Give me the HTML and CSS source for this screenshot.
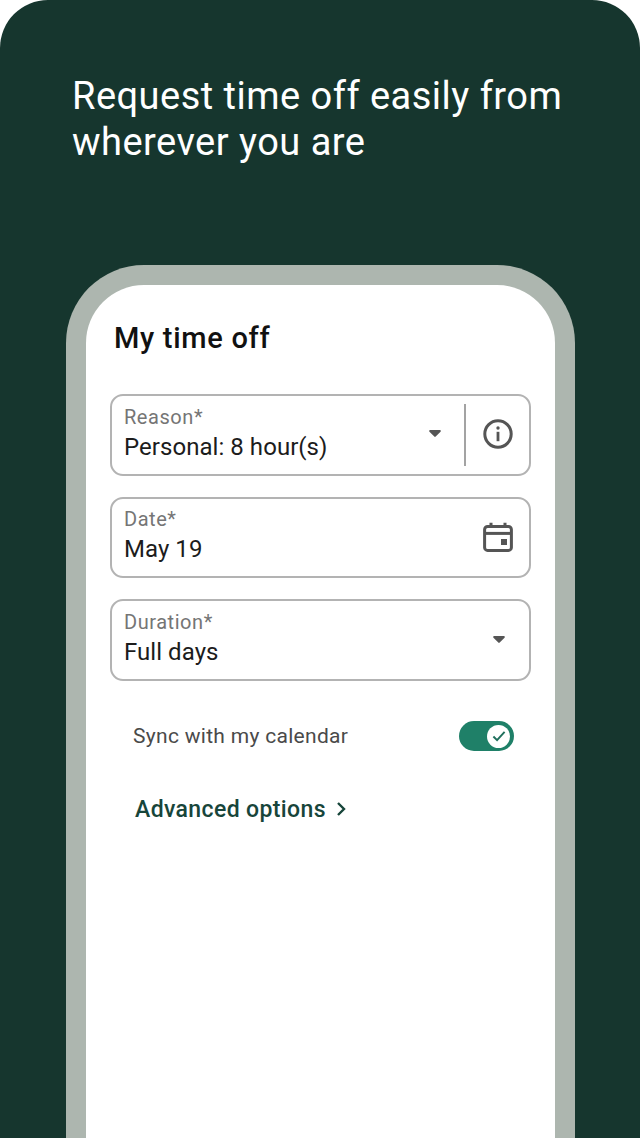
FILE: index.html
```html
<!DOCTYPE html>
<html lang="en">
<head>
<meta charset="utf-8">
<title>Request time off</title>
<link rel="stylesheet" href="styles.css">
</head>
<body>
<main class="screen">
  <h1 class="headline">Request time off easily from wherever you are</h1>
  <section class="phone">
    <div class="display">
      <h2 class="title">My time off</h2>
      <div class="field">
        <div class="field-text">
          <span class="label">Reason*</span>
          <span class="value">Personal: 8 hour(s)</span>
        </div>
        <svg class="caret" viewBox="0 0 12 7"><path d="M1.2 0h9.6a1 1 0 0 1 .75 1.7L6.7 6.6a1 1 0 0 1-1.4 0L.45 1.7A1 1 0 0 1 1.2 0z"/></svg>
        <span class="divider"></span>
        <svg class="icon" viewBox="0 0 30 30"><circle cx="15" cy="15" r="13.2" class="line"/><circle cx="15" cy="9" r="1.7" class="solid"/><rect x="13.6" y="12.8" width="2.8" height="9.4" class="solid"/></svg>
      </div>
      <div class="field">
        <div class="field-text">
          <span class="label">Date*</span>
          <span class="value">May 19</span>
        </div>
        <svg class="icon" viewBox="0 0 30 30"><rect x="1.6" y="4.4" width="26.8" height="24" rx="3" class="line"/><path d="M1.6 11.4h26.8" class="line"/><path d="M8 .8v4M22 .8v4" class="line"/><rect x="18" y="17" width="6" height="6" class="solid"/></svg>
      </div>
      <div class="field">
        <div class="field-text">
          <span class="label">Duration*</span>
          <span class="value">Full days</span>
        </div>
        <svg class="caret caret-end" viewBox="0 0 12 7"><path d="M1.2 0h9.6a1 1 0 0 1 .75 1.7L6.7 6.6a1 1 0 0 1-1.4 0L.45 1.7A1 1 0 0 1 1.2 0z"/></svg>
      </div>
      <div class="sync">
        <span class="sync-label">Sync with my calendar</span>
        <span class="toggle">
          <span class="knob">
            <svg viewBox="0 0 16 16"><path d="M1.6 8.6l4.2 4.2 8.6-9.4"/></svg>
          </span>
        </span>
      </div>
      <div class="advanced">
        <span>Advanced options</span>
        <svg viewBox="0 0 10 16"><path d="M2 2l6 6-6 6"/></svg>
      </div>
    </div>
  </section>
</main>
</body>
</html>
```

FILE: styles.css
```css
* { box-sizing: border-box; }
html, body { margin: 0; background: #fff; }
body { width: 640px; height: 1138px; overflow: hidden; font-family: "Roboto", "Liberation Sans", sans-serif; }
.screen {
  height: 1138px;
  background: #16362e;
  border-radius: 48px 48px 0 0;
  padding: 73px 66px 0 72px;
  overflow: hidden;
}
.headline {
  margin: 0;
  width: 520px;
  color: #fff;
  font-size: 38px;
  line-height: 46px;
  font-weight: 400;
  letter-spacing: 0.48px;
  height: 192px;
}
.phone {
  margin-left: -6px;
  width: 509px;
  height: 900px;
  padding: 20px 20px 0;
  background: #adb6af;
  border-radius: 78px 78px 0 0;
}
.display {
  height: 860px;
  background: #fff;
  border-radius: 58px 58px 0 0;
  padding: 35px 24px 0;
}
.title {
  margin: 0 0 38px 4px;
  font-size: 29px;
  line-height: 36px;
  font-weight: 500;
  letter-spacing: 0.7px;
  color: #111;
}
.field {
  display: flex;
  align-items: center;
  height: 81.5px;
  margin-bottom: 21px;
  padding: 0 16px 0 12px;
  border: 2px solid #b3b3b3;
  border-radius: 13px;
}
.field-text { flex: 1; display: flex; flex-direction: column; gap: 1px; padding-bottom: 4px; }
.label { font-size: 20px; line-height: 28px; letter-spacing: 0.55px; color: #757575; }
.value { font-size: 24px; line-height: 31px; letter-spacing: 0.05px; color: #1c1c1c; }
.caret { width: 12px; height: 7px; fill: #555; margin: -2px 23px 0 0; }
.caret-end { margin: -1px 8px 0 0; }
.divider { width: 1.5px; height: 62px; background: #a3a3a3; margin-right: 17.5px; }
.icon { width: 30px; height: 30px; flex: none; margin-top: -1px; }
.line { fill: none; stroke: #555; stroke-width: 3; }
.solid { fill: #555; }
.sync {
  display: flex;
  align-items: center;
  justify-content: space-between;
  height: 30px;
  margin: 40.5px 17px 0 23px;
}
.sync-label { font-size: 21px; letter-spacing: 0.3px; color: #4a4a4a; }
.toggle {
  display: flex;
  justify-content: flex-end;
  align-items: center;
  width: 55px;
  height: 30px;
  padding-right: 4px;
  background: #1f8068;
  border-radius: 15px;
}
.knob {
  display: flex;
  align-items: center;
  justify-content: center;
  width: 23px;
  height: 23px;
  background: #fff;
  border-radius: 50%;
}
.knob svg { width: 14px; height: 14px; fill: none; stroke: #1f6f5c; stroke-width: 2.2; }
.advanced {
  display: flex;
  align-items: center;
  gap: 10px;
  margin: 42px 0 0 25px;
  height: 32px;
  font-size: 23px;
  font-weight: 500;
  letter-spacing: 0.38px;
  color: #17453a;
}
.advanced svg { width: 10px; height: 16px; fill: none; stroke: #17453a; stroke-width: 2.4; }
```
